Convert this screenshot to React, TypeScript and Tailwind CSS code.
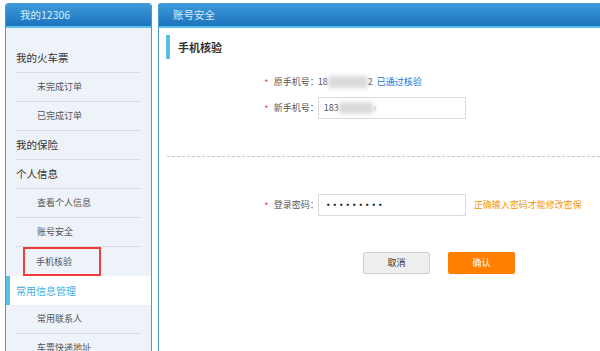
import React from 'react';

const font = { fontFamily: '"Noto Sans CJK SC", "Noto Sans", sans-serif' };

type Item = { label: string; level: 1 | 2; active?: boolean; boxed?: boolean };

const items: Item[] = [
	{ label: '我的火车票', level: 1 },
	{ label: '未完成订单', level: 2 },
	{ label: '已完成订单', level: 2 },
	{ label: '我的保险', level: 1 },
	{ label: '个人信息', level: 1 },
	{ label: '查看个人信息', level: 2 },
	{ label: '账号安全', level: 2 },
	{ label: '手机核验', level: 2, boxed: true },
	{ label: '常用信息管理', level: 1, active: true },
	{ label: '常用联系人', level: 2 },
	{ label: '车票快递地址', level: 2 },
];

const PanelHeader: React.FC<{ title: string; pad: string }> = ({ title, pad }) => (
	<div className={`h-[24px] bg-gradient-to-b from-[#3d9ad9] to-[#1c74bd] border-b-[2px] border-[#5cc0ef] flex items-center ${pad}`}>
		<span className="text-[10.5px] text-[#dcecfa]">{title}</span>
	</div>
);

const Sidebar: React.FC = () => (
	<aside className="w-[147px] shrink-0 h-[360px] rounded-t-[3px] border border-[#4a9ad6] bg-[#eef2f9] overflow-hidden">
		<PanelHeader title="我的12306" pad="pl-[14px]" />
		<div className="pt-[16px]">
			{items.map((it, i) => {
				if (it.active) {
					return (
						<div key={i} className="h-[29px] bg-white flex items-center border-l-[4px] border-[#5bc0e8] pl-[6px]">
							<span className="text-[10px] text-[#3fb0e3]">{it.label}</span>
						</div>
					);
				}
				const next = items[i + 1];
				const line = !(next && next.active) && !it.boxed;
				return (
					<div key={i} className="mx-[10px]">
						<div
							className={`h-[29px] flex items-center ${line ? 'border-b border-[#d8dde4]' : ''} ${
								it.boxed ? 'border-[2px] border-[#f23b3b] ml-[7px] mr-[40px] pl-[11px]' : it.level === 2 ? 'pl-[21px]' : ''
							}`}
						>
							<span className={it.level === 1 ? 'text-[10.5px] text-[#333]' : 'text-[9px] text-[#555]'}>{it.label}</span>
						</div>
					</div>
				);
			})}
		</div>
	</aside>
);

const Star = () => <span className="text-[#ef5a5a] text-[10px] mr-[5px]">*</span>;

const Blur: React.FC<{ w: number }> = ({ w }) => (
	<span className="inline-block h-[12px] bg-[#dadada] blur-[2px] align-middle" style={{ width: w }} />
);

const Label: React.FC<{ text: string }> = ({ text }) => (
	<span className="w-[44px] whitespace-nowrap text-[9px]">{text}</span>
);

const Main: React.FC = () => (
	<section className="w-[460px] shrink-0 h-[360px] rounded-tl-[3px] border-l border-t border-[#4a9ad6] bg-white">
		<PanelHeader title="账号安全" pad="pl-[14px]" />
		<div className="pl-[7px] pt-[7px]">
			<div className="h-[24px] border-l-[4px] border-[#5bc0e8] flex items-center pl-[8px]">
				<span className="text-[11px] font-bold text-[#333]">手机核验</span>
			</div>
		</div>
		<div className="pl-[105px] pt-[12px] text-[9px] text-[#555]">
			<div className="h-[22px] flex items-center">
				<Star />
				<Label text="原手机号：" />
				<span>18</span>
				<Blur w={40} />
				<span>2</span>
				<span className="ml-[4px] text-[#1a72d6] text-[9px]">已通过核验</span>
			</div>
			<div className="h-[24px] mt-[3px] flex items-center">
				<Star />
				<Label text="新手机号：" />
				<div className="w-[148px] h-[22px] border border-[#d9d9d9] flex items-center pl-[5px]">
					<span>183</span>
					<Blur w={34} />
					<span className="text-[#ccc] text-[7px]">4</span>
				</div>
			</div>
		</div>
		<div className="mx-[8px] mt-[36px] border-t border-dashed border-[#c8c8c8]" />
		<div className="pl-[105px] pt-[36px] text-[9px] text-[#555]">
			<div className="h-[24px] flex items-center">
				<Star />
				<Label text="登录密码：" />
				<div className="w-[148px] h-[22px] border border-[#d9d9d9] flex items-center pl-[5px]">
					<span className="text-[#111] text-[9px] tracking-[-2.5px] font-bold">•••••••••</span>
				</div>
				<span className="ml-[8px] text-[#f39800] text-[9px] whitespace-nowrap">正确输入密码才能修改密保</span>
			</div>
		</div>
		<div className="flex pl-[204px] pt-[35px] gap-[18px]">
			<button className="w-[67px] h-[22px] rounded-[2px] bg-[#eeeeee] border border-[#cfcfcf] text-[9px] text-[#333]">取消</button>
			<button className="w-[67px] h-[22px] rounded-[2px] bg-[#ff8000] text-[9px] text-white">确认</button>
		</div>
	</section>
);

export default function App() {
	return (
		<div className="w-[600px] h-[351px] overflow-hidden bg-white flex gap-[6px] pl-[5px] pt-[3px]" style={font}>
			<Sidebar />
			<Main />
		</div>
	);
}
